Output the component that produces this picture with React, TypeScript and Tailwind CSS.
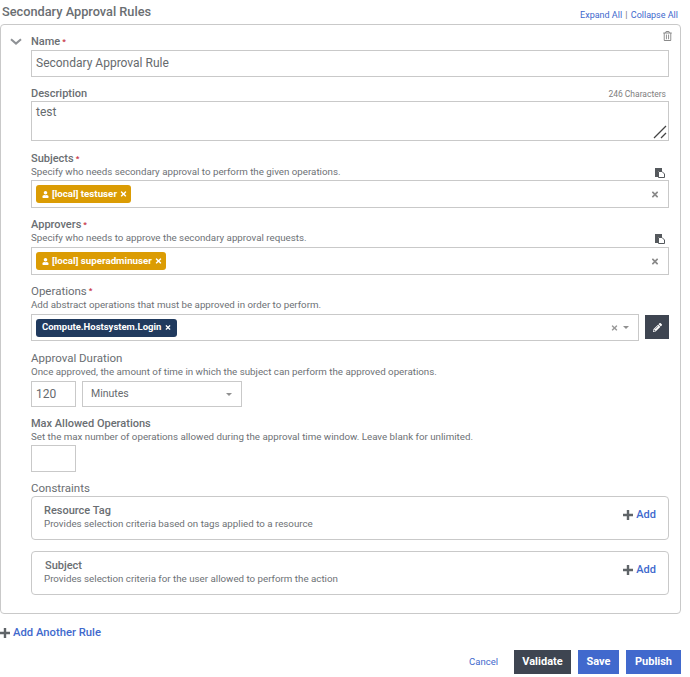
import React from "react";
import { FaPencilAlt, FaTimes, FaUser, FaRegTrashAlt } from "react-icons/fa";

function Label({ children, req, mt, light }: { children: React.ReactNode; req?: boolean; mt: string; light?: boolean }) {
  return (
    <div className={`${mt} h-[14px] flex items-center leading-[14px] text-[#6a6e72] ${light ? "text-[11.5px] font-normal pb-[2px]" : "text-[11px] font-medium"}`}>
      {children}
      {req && <span className="ml-[2px] text-[#c9374a] text-[8px] font-bold">*</span>}
    </div>
  );
}

function Help({ children, className = "" }: { children: React.ReactNode; className?: string }) {
  return <div className={`h-[13px] text-[9.75px] leading-[13px] text-[#6d7175] whitespace-nowrap ${className}`}>{children}</div>;
}

function Plus() {
  return (
    <svg className="w-[10px] h-[10px] mr-[3px] shrink-0" viewBox="0 0 10 10">
      <path d="M5 0 V10 M0 5 H10" stroke="#5f6468" strokeWidth="2.4" fill="none" />
    </svg>
  );
}

function Tag({ children }: { children: React.ReactNode }) {
  return (
    <span className="inline-flex items-center h-[18px] rounded-[3px] bg-[#db9c04] text-white text-[9.75px] font-bold pl-[6px] pr-[4px]">
      <FaUser className="w-[7px] h-[7px] mr-[3px]" />
      {children}
      <FaTimes className="w-[7px] h-[8px] ml-[3px]" />
    </span>
  );
}

function CopyIcon({ className }: { className: string }) {
  return (
    <div className={`h-[13px] flex justify-end pr-[4px] ${className}`}>
      <svg className="w-[10px] h-[10px]" viewBox="0 0 10 10">
        <path d="M0 0 H7 V3 H3 V9 H0 Z" fill="#55595d" />
        <path d="M3.5 3.5 H7 L9.5 6 V9.5 H3.5 Z" fill="#fff" stroke="#55595d" strokeWidth="1" />
      </svg>
    </div>
  );
}

function TagBox({ children }: { children: React.ReactNode }) {
  return (
    <div className="h-[28px] border border-[#c9c9c9] flex items-center justify-between pl-[4px] pr-[9px]">
      {children}
      <FaTimes className="w-[8px] h-[9px] text-[#8a8a8a]" />
    </div>
  );
}

function Constraint({ title, desc, mt, pl }: { title: string; desc: string; mt: string; pl: string }) {
  return (
    <div className={`${mt} h-[44px] border border-[#c9c9c9] rounded-[4px] flex justify-between pl-[12px] pr-[12px] pt-[7px]`}>
      <div>
        <div className={`text-[11px] leading-[14px] font-medium text-[#6a6e72] ${pl}`}>{title}</div>
        <div className="text-[9.75px] leading-[13px] text-[#6d7175] -mt-[1px]">{desc}</div>
      </div>
      <div className="flex items-center h-[16px] mt-[3px] text-[11px] font-medium text-[#4169cd]">
        <Plus />
        Add
      </div>
    </div>
  );
}

export default function App() {
  return (
    <div className="w-[690px] h-[677px] bg-white overflow-hidden font-['Roboto',sans-serif]">
      <div className="w-[681px] flex items-center justify-between h-[24px] pl-[2px]">
        <div className="text-[12.75px] font-medium text-[#6a6e72] leading-[24px]">Secondary Approval Rules</div>
        <div className="text-[9px] text-[#4169cd] pt-[8px] mr-[3px]">
          Expand All <span className="mx-[1px] text-[#777]">|</span> Collapse All
        </div>
      </div>

      <div className="relative w-[681px] h-[590px] border border-[#c9c9c9] rounded-[4px] pl-[30px] pr-[11px]">
        <svg className="absolute left-[9px] top-[13px] w-[12px] h-[8px]" viewBox="0 0 12 8">
          <path d="M1 1.2 L6 5.6 L11 1.2" fill="none" stroke="#8e9195" strokeWidth="2" />
        </svg>
        <FaRegTrashAlt className="absolute right-[8px] top-[6px] w-[9px] h-[10px] text-[#8a8a8a]" />

        <Label req mt="mt-[10px]">Name</Label>
        <div className="mt-[1px] h-[27px] border border-[#c9c9c9] flex items-center pl-[4px] pb-[2px] text-[12px] text-[#666a6e]">
          Secondary Approval Rule
        </div>

        <div className="mt-[10px] h-[14px] flex items-center justify-between">
          <div className="text-[11px] font-medium text-[#6a6e72]">Description</div>
          <div className="text-[8.5px] text-[#808080] pr-[3px]">246 Characters</div>
        </div>
        <div className="relative h-[40px] border border-[#c9c9c9] pl-[4px] pt-[2px] text-[12px] leading-[16px] text-[#666a6e]">
          test
          <svg className="absolute right-[1px] bottom-[1px] w-[14px] h-[14px]" viewBox="0 0 14 14">
            <path d="M1 13 L13 1 M8 13 L13 8" stroke="#444" strokeWidth="1.3" fill="none" />
          </svg>
        </div>

        <Label req mt="mt-[11px]">Subjects</Label>
        <Help className="-mt-[1px]">Specify who needs secondary approval to perform the given operations.</Help>
        <CopyIcon className="-mt-[10px] -mb-[1px]" />
        <TagBox>
          <Tag>[local] testuser</Tag>
        </TagBox>

        <Label req mt="mt-[10px]">Approvers</Label>
        <Help className="-mt-[1px]">Specify who needs to approve the secondary approval requests.</Help>
        <CopyIcon className="-mt-[10px]" />
        <TagBox>
          <Tag>[local] superadminuser</Tag>
        </TagBox>

        <Label req light mt="mt-[10px]">Operations</Label>
        <Help className="-mt-[1px]">Add abstract operations that must be approved in order to perform.</Help>
        <div className="mt-[3px] flex gap-[6px]">
          <div className="flex-1 h-[27px] border border-[#c9c9c9] flex items-center justify-between pl-[4px] pr-[9px]">
            <span className="inline-flex items-center h-[18px] rounded-[3px] bg-[#203a5e] text-white text-[9.5px] font-bold px-[6px]">
              Compute.Hostsystem.Login
              <FaTimes className="w-[6px] h-[7px] ml-[4px]" />
            </span>
            <div className="flex items-center gap-[5px]">
              <FaTimes className="w-[7px] h-[8px] text-[#9a9a9a]" />
              <span className="w-0 h-0 border-x-[3px] border-x-transparent border-t-[3px] border-t-[#909090]" />
            </div>
          </div>
          <div className="w-[24px] h-[24px] mt-[1px] bg-[#3e4551] flex items-center justify-center">
            <FaPencilAlt className="w-[9px] h-[9px] text-white" />
          </div>
        </div>

        <Label light mt="mt-[11px]">Approval Duration</Label>
        <Help className="-mt-[1px]">Once approved, the amount of time in which the subject can perform the approved operations.</Help>
        <div className="mt-[3px] flex gap-[6px]">
          <div className="w-[45px] h-[26px] border border-[#c9c9c9] flex items-center pl-[4px] pb-[1px] text-[12px] text-[#666a6e]">120</div>
          <div className="w-[160px] h-[26px] border border-[#c9c9c9] flex items-center justify-between pl-[8px] pr-[9px] text-[10.5px] text-[#666a6e]">
            Minutes
            <span className="w-0 h-0 border-x-[3px] border-x-transparent border-t-[3px] border-t-[#909090]" />
          </div>
        </div>

        <Label mt="mt-[10px]">Max Allowed Operations</Label>
        <Help className="-mt-[1px]">Set the max number of operations allowed during the approval time window. Leave blank for unlimited.</Help>
        <div className="mt-[2px] w-[45px] h-[27px] border border-[#c9c9c9]" />

        <Label light mt="mt-[10px]">Constraints</Label>
        <Constraint mt="mt-0" pl="" title="Resource Tag" desc="Provides selection criteria based on tags applied to a resource" />
        <Constraint mt="mt-[11px]" pl="pl-[1px]" title="Subject" desc="Provides selection criteria for the user allowed to perform the action" />
      </div>

      <div className="mt-[12px] h-[14px] flex items-center text-[11.25px] font-medium text-[#4169cd]">
        <Plus />
        Add Another Rule
      </div>

      <div className="w-[681px] mt-[10px] flex items-center justify-end gap-[7px]">
        <div className="text-[9.5px] text-[#4169cd] mr-[9px]">Cancel</div>
        <div className="w-[57px] h-[24px] bg-[#3e4551] text-white text-[11px] font-bold flex items-center justify-center">Validate</div>
        <div className="w-[41px] h-[24px] bg-[#4169cd] text-white text-[11px] font-bold flex items-center justify-center">Save</div>
        <div className="w-[55px] h-[24px] bg-[#4169cd] text-white text-[11px] font-bold flex items-center justify-center">Publish</div>
      </div>
    </div>
  );
}
